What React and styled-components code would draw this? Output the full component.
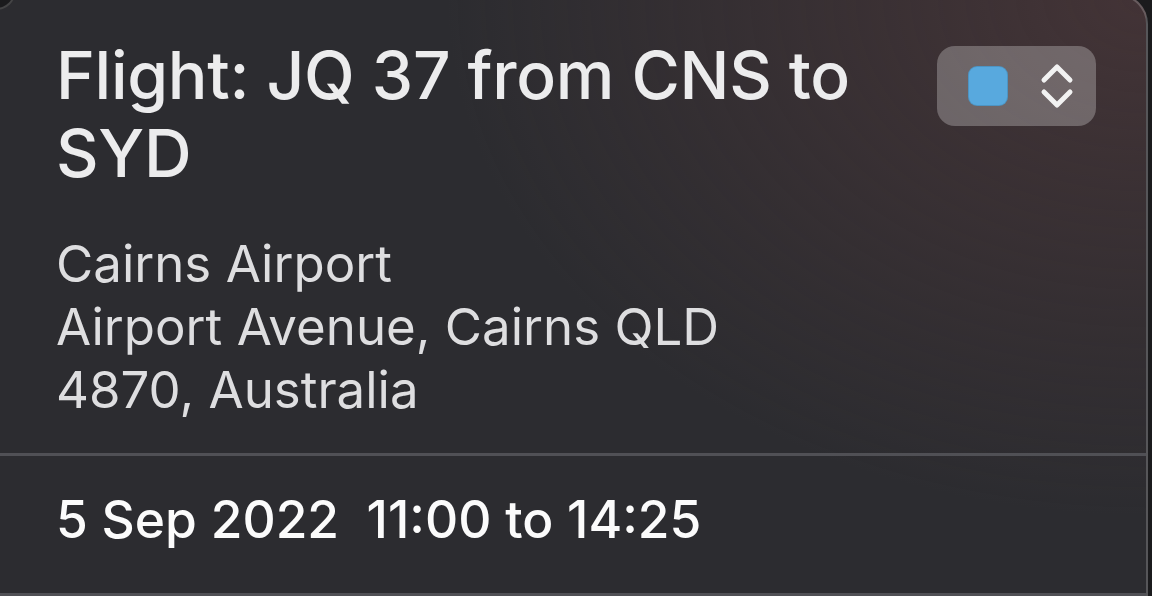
import React from 'react'
import styled, { createGlobalStyle } from 'styled-components'

const Global = createGlobalStyle`
  html, body {
    margin: 0;
    padding: 0;
    background: #1b1b1d;
    overflow: hidden;
  }
  body {
    font-family: Inter, "Noto Sans", "Liberation Sans", sans-serif;
    -webkit-font-smoothing: antialiased;
  }
`

const Card = styled.div`
  position: relative;
  width: 1168px;
  height: 700px;
  margin: -6px 0 0 -20px;
  box-sizing: border-box;
  border: 2px solid rgba(255, 255, 255, 0.2);
  border-radius: 0 30px 0 0;
  background:
    radial-gradient(ellipse 700px 520px at 100% 0%, rgba(82, 56, 58, 0.6), rgba(82, 56, 58, 0) 100%),
    #2c2c30;

  &::before {
    content: '';
    position: absolute;
    left: -2px;
    top: -26px;
    width: 34px;
    height: 38px;
    background: #1b1b1d;
    border: 2px solid rgba(255, 255, 255, 0.18);
    border-left: none;
    border-top: none;
    border-bottom-right-radius: 20px;
  }
`

const Header = styled.div`
  display: flex;
  justify-content: space-between;
  align-items: flex-start;
  padding: 40px 50px 0 74px;
`

const Title = styled.h1`
  margin: 0;
  max-width: 860px;
  font-size: 66px;
  line-height: 78px;
  font-weight: 500;
  color: #ececed;
  letter-spacing: -0.3px;
`

const Picker = styled.button`
  display: flex;
  align-items: center;
  gap: 32px;
  flex-shrink: 0;
  margin-top: 10px;
  width: 159px;
  height: 80px;
  padding: 0 0 0 31px;
  box-sizing: border-box;
  border: none;
  border-radius: 18px;
  background: rgba(255, 255, 255, 0.26);
`

const Swatch = styled.span`
  width: 40px;
  height: 40px;
  border-radius: 9px;
  box-sizing: border-box;
  background: ${p => p.color};
  border: 1.5px solid rgba(0, 0, 0, 0.12);
`

const Address = styled.div`
  padding: 40px 0 0 74px;
  font-size: 51px;
  line-height: 63px;
  color: #dedee0;
`

const Separator = styled.hr`
  margin: ${p => p.top}px 0 0;
  border: none;
  height: 3px;
  background: #505055;
`

const When = styled.div`
  padding: 32px 0 0 74px;
  height: 137px;
  box-sizing: border-box;
  font-size: 51.5px;
  line-height: 63px;
  font-weight: 500;
  color: #fbfbfb;
  white-space: pre;
`

const Chevrons = () => (
  <svg width="34" height="48" viewBox="0 0 34 48" fill="none" stroke="#f2f2f2" strokeWidth="5" strokeLinecap="round" strokeLinejoin="round">
    <path d="M4 18 L17 5 L30 18" />
    <path d="M4 30 L17 43 L30 30" />
  </svg>
)

export default function App() {
  return (
    <>
      <Global />
      <Card>
        <Header>
          <Title>Flight: JQ 37 from CNS to SYD</Title>
          <Picker>
            <Swatch color="#58a9de" />
            <Chevrons />
          </Picker>
        </Header>
        <Address>
          <div>Cairns Airport</div>
          <div>Airport Avenue, Cairns QLD</div>
          <div>4870, Australia</div>
        </Address>
        <Separator top={32} />
        <When>{'5 Sep 2022  11:00 to 14:25'}</When>
        <Separator top={0} />
      </Card>
    </>
  )
}
